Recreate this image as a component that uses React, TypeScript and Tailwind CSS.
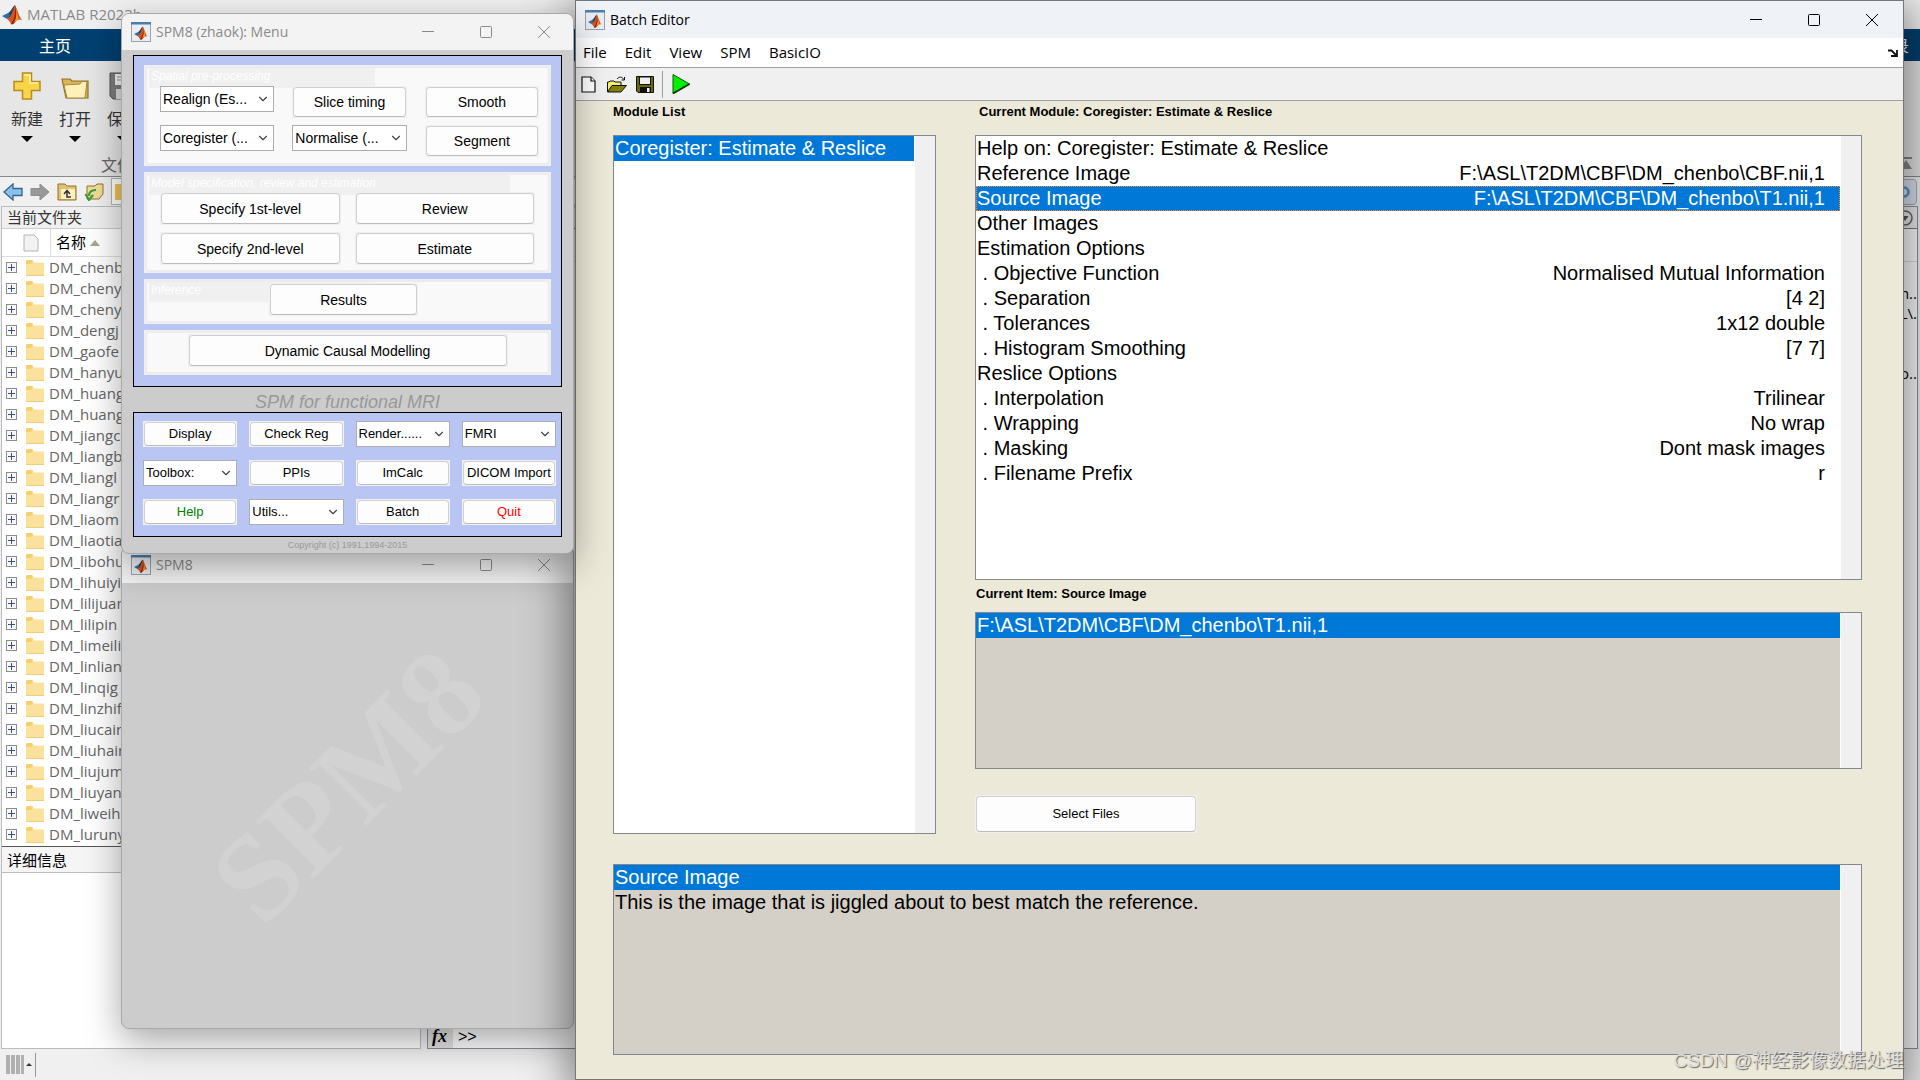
import React from 'react';
import { ChevronDown } from 'lucide-react';

const folders = [
  'DM_chenb', 'DM_cheny', 'DM_chenyu', 'DM_dengj', 'DM_gaofe', 'DM_hanyu', 'DM_huang',
  'DM_huangyu', 'DM_jiangc', 'DM_liangb', 'DM_liangl', 'DM_liangr', 'DM_liaom', 'DM_liaotia',
  'DM_libohu', 'DM_lihuiyi', 'DM_lilijuan', 'DM_lilipin', 'DM_limeili', 'DM_linlian', 'DM_linqig',
  'DM_linzhif', 'DM_liucain', 'DM_liuhain', 'DM_liujum', 'DM_liuyan', 'DM_liweih', 'DM_luruny',
];

const moduleItems = [
  { label: 'Help on: Coregister: Estimate & Reslice', value: '' },
  { label: 'Reference Image', value: 'F:\\ASL\\T2DM\\CBF\\DM_chenbo\\CBF.nii,1' },
  { label: 'Source Image', value: 'F:\\ASL\\T2DM\\CBF\\DM_chenbo\\T1.nii,1', selected: true },
  { label: 'Other Images', value: '' },
  { label: 'Estimation Options', value: '' },
  { label: ' . Objective Function', value: 'Normalised Mutual Information' },
  { label: ' . Separation', value: '[4 2]' },
  { label: ' . Tolerances', value: '1x12 double' },
  { label: ' . Histogram Smoothing', value: '[7 7]' },
  { label: 'Reslice Options', value: '' },
  { label: ' . Interpolation', value: 'Trilinear' },
  { label: ' . Wrapping', value: 'No wrap' },
  { label: ' . Masking', value: 'Dont mask images' },
  { label: ' . Filename Prefix', value: 'r' },
];

function MatlabMark() {
  return (
    <g>
      <path d="M0 11 L6 8 L9 10.5 L5 14 Z" fill="#2f6ea8" />
      <path d="M6 8 C9 7 10 2 13 0 L12 9 L9 12.5 L5 14 L8 10.5 Z" fill="#1d3f66" />
      <path d="M13 0 C15 3 17 12 20 15 C17 13.500 15 15 13 17.500 C11.500 19.500 10 20 9 19 C8 17 7 15 5 14 C9 13 11 5 13 0 Z" fill="#d8541c" />
      <path d="M13 0 C13.500 7 13 14 9 19 C11 20 13 17 14 16 C15 11 14 4 13 0 Z" fill="#8c1f12" />
      <path d="M13.500 2 C15 8 15 13 11.500 18 C14 16.500 15 14.500 16.500 14 C15.500 10 15 5 13.500 2 Z" fill="#f59a2c" />
    </g>
  );
}

function WindowIcon() {
  return (
    <svg viewBox="0 0 20 20" className="w-5 h-5 shrink-0" aria-hidden="true">
      <rect x="0.500" y="0.500" width="19" height="19" fill="#e9edf1" stroke="#9aa3ad" />
      <rect x="0" y="0" width="20" height="2.500" fill="#4d7ea8" />
      <g transform="translate(3 4.500) scale(0.68)">
        <MatlabMark />
      </g>
    </svg>
  );
}

function TitleBar({ title, active = false, height }: { title: string; active?: boolean; height: string }) {
  const tone = active ? 'bg-[#eff3f8] text-black pr-0.5' : 'bg-[#f3f3f3] text-[#8a8a8a]';
  return (
    <header className={`flex items-center shrink-0 pl-[9px] ${height} ${tone}`}>
      <WindowIcon />
      <h2 className="ml-[5px] flex-1 font-['Open_Sans',sans-serif] text-sm">{title}</h2>
      <button aria-label="Minimize" className="w-[58px] h-full flex items-center justify-center">
        <svg viewBox="0 0 12 12" className="w-3 h-3" stroke="currentColor">
          <path d="M0 5.500H12" />
        </svg>
      </button>
      <button aria-label="Maximize" className="w-[58px] h-full flex items-center justify-center">
        <svg viewBox="0 0 12 12" className="w-3 h-3" stroke="currentColor" fill="none">
          <rect x="0.500" y="0.500" width="11" height="11" rx="1" />
        </svg>
      </button>
      <button aria-label="Close" className="w-[58px] h-full flex items-center justify-center">
        <svg viewBox="0 0 12 12" className="w-3 h-3" stroke="currentColor">
          <path d="M0 0L12 12M12 0L0 12" />
        </svg>
      </button>
    </header>
  );
}

function PushButton({ children, className = '' }: { children: React.ReactNode; className?: string }) {
  return (
    <div className={`bg-[#f0f0f0] p-px ${className}`}>
      <button className="w-full h-full rounded border border-[#d0d0d0] border-b-[#bcbcbc] bg-[#fdfdfd] whitespace-nowrap">
        {children}
      </button>
    </div>
  );
}

function PopupMenu({ name, text, className = '' }: { name: string; text: string; className?: string }) {
  return (
    <div className={`relative h-[26px] ${className}`}>
      <select
        aria-label={name}
        className="w-full h-full appearance-none border border-[#adadad] bg-white pl-0.5 pr-5 text-black"
      >
        <option>{text}</option>
      </select>
      <ChevronDown className="absolute right-1 top-1.5 w-3.5 h-3.5 text-[#444] pointer-events-none" strokeWidth={2} />
    </div>
  );
}

function Frame({ label, labelWidth = '', className, children }: {
  label?: string;
  labelWidth?: string;
  className: string;
  children: React.ReactNode;
}) {
  return (
    <section className="relative bg-[#f0f0f0] p-px">
      {label && (
        <h3 className={`absolute left-[5px] top-[3px] h-5 pl-0.5 bg-[#f0f0f0] text-white text-xs italic ${labelWidth}`}>
          {label}
        </h3>
      )}
      <div className={`rounded border-2 border-[#ececec] bg-[#f9f9f9] ${className}`}>{children}</div>
    </section>
  );
}

function MenuWindow() {
  return (
    <section className="relative z-10 flex flex-col rounded-lg overflow-hidden border border-[#a8a8a8] bg-[#ccc] shadow-[0_12px_36px_rgba(0,0,0,0.35)]">
      <TitleBar title="SPM8 (zhaok): Menu" height="h-[36px]" />
      <div className="px-[11px] pt-[5px]">
        <div className="flex flex-col gap-1.5 border border-black bg-[#b9c6f4] px-[10px] pt-[9px] pb-[11px] text-sm">
          <Frame label="Spatial pre-processing" labelWidth="w-[226px]" className="h-[99px] pl-[13px] pr-[9px] pt-[18px]">
            <div className="relative grid grid-cols-3 gap-x-[18px] gap-y-[7px]">
              <PopupMenu name="Realign" text="Realign (Es..." />
              <PushButton className="h-8">Slice timing</PushButton>
              <PushButton className="h-8">Smooth</PushButton>
              <PopupMenu name="Coregister" text="Coregister (..." />
              <PopupMenu name="Normalise" text="Normalise (..." />
              <PushButton className="h-8">Segment</PushButton>
            </div>
          </Frame>
          <Frame label="Model specification, review and estimation" labelWidth="w-[361px]" className="h-[99px] pl-[13px] pr-[13px] pt-[17px]">
            <div className="relative grid grid-cols-2 gap-x-[14px] gap-y-[7px]">
              <PushButton className="h-[33px]">Specify 1st-level</PushButton>
              <PushButton className="h-[33px]">Review</PushButton>
              <PushButton className="h-[33px]">Specify 2nd-level</PushButton>
              <PushButton className="h-[33px]">Estimate</PushButton>
            </div>
          </Frame>
          <Frame label="Inference" labelWidth="w-[226px]" className="h-[43px] pt-px pr-2">
            <PushButton className="relative mx-auto w-[149px] h-[33px]">Results</PushButton>
          </Frame>
          <Frame className="h-[43px] pt-px">
            <PushButton className="mx-auto w-[320px] h-[33px]">Dynamic Causal Modelling</PushButton>
          </Frame>
        </div>
        <p className="h-[25px] pt-[3px] text-center text-lg leading-6 italic text-[#999]">SPM for functional MRI</p>
        <div className="grid grid-cols-4 gap-x-3 gap-y-[13px] border border-black bg-[#b9c6f4] pl-[9px] pr-[5px] pt-2 pb-[11px] text-[13px]">
          <PushButton className="h-[26px]">Display</PushButton>
          <PushButton className="h-[26px]">Check Reg</PushButton>
          <PopupMenu name="Render" text="Render......" />
          <PopupMenu name="Modality" text="FMRI" />
          <PopupMenu name="Toolbox" text="Toolbox:" />
          <PushButton className="h-[26px]">PPIs</PushButton>
          <PushButton className="h-[26px]">ImCalc</PushButton>
          <PushButton className="h-[26px]">DICOM Import</PushButton>
          <PushButton className="h-[26px] text-[#008000]">Help</PushButton>
          <PopupMenu name="Utils" text="Utils..." />
          <PushButton className="h-[26px]">Batch</PushButton>
          <PushButton className="h-[26px] text-[#f00]">Quit</PushButton>
        </div>
        <p className="h-4 text-center text-[9px] leading-4 text-[#999]">Copyright (c) 1991,1994-2015</p>
      </div>
    </section>
  );
}

function GraphicsWindow() {
  return (
    <section className="flex-1 -mt-2 flex flex-col rounded-lg overflow-hidden border border-[#a8a8a8] bg-[#ccc] shadow-[0_12px_36px_rgba(0,0,0,0.35)]">
      <TitleBar title="SPM8" height="h-[36px]" />
      <div className="flex-1 flex items-center justify-center pb-10">
        <span className="-rotate-45 font-['Liberation_Serif',serif] font-bold text-[124px] leading-none text-[#d2d2d2]">
          SPM8
        </span>
      </div>
    </section>
  );
}

function ListBox({ label, className, children }: { label: string; className: string; children: React.ReactNode }) {
  return (
    <div className={`flex border border-[#828790] text-xl leading-[25px] ${className}`}>
      <ul role="listbox" aria-label={label} className="flex-1 min-w-0">
        {children}
      </ul>
      <div className="w-[21px] border-l border-white bg-[#f0f0f0]" />
    </div>
  );
}

function BatchEditor() {
  return (
    <section className="absolute left-[575px] right-4 inset-y-0 flex flex-col border border-[#777] bg-[#ece9d8] shadow-[0_12px_40px_8px_rgba(0,0,0,0.45)]">
      <TitleBar title="Batch Editor" active height="h-[37px]" />
      <nav className="h-[30px] shrink-0 flex items-center gap-[18px] pl-[7px] pr-[5px] border-b border-[#a0a0a0] bg-white font-['Open_Sans',sans-serif] text-[15px]">
        <button>File</button>
        <button>Edit</button>
        <button>View</button>
        <button>SPM</button>
        <button>BasicIO</button>
        <button aria-label="Dock window" className="ml-auto">
          <svg viewBox="0 0 10 8" className="w-2.5 h-2" fill="none" stroke="#111" strokeWidth="1.800">
            <path d="M0 1.500H3.500L8 6M9 1V7H3" />
          </svg>
        </button>
      </nav>
      <div className="h-[33px] shrink-0 flex items-center pl-[5px] border-b border-[#a0a0a0] bg-[#f0f0f0]">
        <button aria-label="New batch">
          <svg viewBox="0 0 15 17" className="w-[15px] h-[17px]" fill="#fff" stroke="#111" strokeWidth="1.200">
            <path d="M1 1H10L14 5V16H1Z" />
            <path d="M10 1V5H14" />
          </svg>
        </button>
        <button aria-label="Open batch" className="ml-[11px]">
          <svg viewBox="0 0 20 17" className="w-5 h-[17px]" stroke="#111" strokeLinejoin="round">
            <path d="M0.500 16V6H2L3 5H7L8 6H14V9" fill="#f5f06a" />
            <path d="M0.500 16L5 9.500H19.500L14 16Z" fill="#84800c" />
            <path d="M10 3C12 0.500 15 0.500 17 3.500M17.500 1V4H14.500" fill="none" />
          </svg>
        </button>
        <button aria-label="Save batch" className="ml-[9px]">
          <svg viewBox="0 0 18 17" className="w-[18px] h-[17px]">
            <path d="M0.500 0.500H17.500V16.500H2L0.500 15Z" fill="#6b680a" stroke="#111" />
            <rect x="3.500" y="1" width="11" height="7.500" fill="#f0f0f0" stroke="#111" />
            <rect x="4" y="11" width="11" height="5.500" fill="#111" />
            <rect x="11" y="12" width="2.500" height="4" fill="#f0f0f0" />
          </svg>
        </button>
        <div className="ml-2 w-px h-[27px] bg-[#a0a0a0]" />
        <button aria-label="Run batch" className="ml-[9px]">
          <svg viewBox="0 0 18 20" className="w-[18px] h-5">
            <path d="M1 0.500L17.500 10L1 19.500Z" fill="#00f000" stroke="#0a5a0a" />
            <path d="M17.500 10L1 19.500" stroke="#033503" strokeWidth="1.800" />
          </svg>
        </button>
      </div>

      <div className="flex-1 flex flex-col gap-[30px] pl-[37px] pr-[41px] pb-6">
        <div className="grid grid-cols-[323fr_887fr] gap-x-[39px]">
          <div className="flex flex-col">
            <h3 className="h-[34px] pt-px text-[13px] leading-5 font-bold">Module List</h3>
            <ListBox label="Module List" className="flex-1 bg-white">
              <li role="option" aria-selected="true" className="bg-[#0078d7] text-white pl-px">
                Coregister: Estimate &amp; Reslice
              </li>
            </ListBox>
          </div>

          <div className="flex flex-col">
            <h3 className="h-[34px] pl-1 pt-px text-[13px] leading-5 font-bold">
              Current Module: Coregister: Estimate &amp; Reslice
            </h3>
            <ListBox label="Current Module" className="h-[445px] bg-white">
              {moduleItems.map((item) => (
                <li
                  key={item.label}
                  role="option"
                  aria-selected={!!item.selected}
                  className={`flex justify-between whitespace-pre pl-px pr-[15px] ${
                    item.selected ? 'bg-[#0078d7] text-white outline-1 outline-dotted -outline-offset-1 outline-[#ff8728]' : ''
                  }`}
                >
                  <span>{item.label}</span>
                  <span>{item.value}</span>
                </li>
              ))}
            </ListBox>
            <h3 className="h-8 pl-px pt-1 text-[13px] leading-5 font-bold">Current Item: Source Image</h3>
            <ListBox label="Current Item" className="h-[157px] bg-[#d4d0c8]">
              <li role="option" aria-selected="true" className="bg-[#0078d7] text-white pl-px">
                F:\ASL\T2DM\CBF\DM_chenbo\T1.nii,1
              </li>
            </ListBox>
            <PushButton className="mt-[26px] mb-px w-[222px] h-[38px] text-[13px]">Select Files</PushButton>
          </div>
        </div>

        <ListBox label="Help" className="flex-1 min-h-[150px] bg-[#d4d0c8]">
          <li role="option" aria-selected="true" className="bg-[#0078d7] text-white pl-px">Source Image</li>
          <li role="option" aria-selected="false" className="pl-px">
            This is the image that is jiggled about to best match the reference.
          </li>
        </ListBox>
      </div>
    </section>
  );
}

function FolderIcon() {
  return (
    <svg viewBox="0 0 18 16" className="ml-[9px] w-[18px] h-4 shrink-0" aria-hidden="true">
      <path d="M0 1.500Q0 0 1.500 0H6L8 2.500H17Q18 2.500 18 3.500V15Q18 16 17 16H1Q0 16 0 15Z" fill="#fbe29c" />
      <path d="M0 1.500Q0 0 1.500 0H6L7 1.500L5 4H0Z" fill="#f5cf6e" />
      <path d="M0 15.500H18" stroke="#f0cd78" />
    </svg>
  );
}

function ToolButton({ label, children }: { label: string; children: React.ReactNode }) {
  return (
    <button className="w-12 flex flex-col items-center text-base leading-6 text-[#333]">
      <svg viewBox="0 0 28 28" className="w-7 h-7 mb-2">{children}</svg>
      {label}
      <svg viewBox="0 0 12 6" className="w-3 h-1.5 mt-1">
        <path d="M0 0H12L6 6Z" fill="#000" />
      </svg>
    </button>
  );
}

function MatlabDesktop() {
  return (
    <div className="flex-1 flex flex-col bg-[#f0f0f0]">
      <header className="h-[29px] flex items-center pl-0.5 text-[#8a8a8a]">
        <svg viewBox="0 0 20 20" className="w-5 h-5" aria-hidden="true">
          <MatlabMark />
        </svg>
        <h1 className="ml-[5px] font-['Open_Sans',sans-serif] text-[15px]">MATLAB R2023b</h1>
      </header>
      <nav className="h-8 flex items-center justify-between bg-[#004071] pl-[39px] pr-[11px] pt-1 text-base text-white">
        <button>主页</button>
        <button>登录</button>
      </nav>
      <div className="h-[116px] flex flex-col border-b border-[#8a8a8a] bg-[#e6e6e6]">
        <div className="flex pl-[3px] pt-[11px]">
          <ToolButton label="新建">
            <path d="M9.500 1H18.500V9.500H27V18.500H18.500V27H9.500V18.500H1V9.500H9.500Z" fill="#f7d548" stroke="#b98a1e" strokeWidth="1.500" />
            <path d="M11 3H17V11H25" fill="none" stroke="#fff3b0" strokeWidth="1.500" />
          </ToolButton>
          <ToolButton label="打开">
            <path d="M1 7H9L11 9H27V26H5Z" fill="#d9b458" stroke="#8f7228" strokeWidth="1.200" />
            <path d="M3 13L19 12L21 9.500H26L24 26H6Z" fill="#fdf0b8" stroke="#a88a3c" />
          </ToolButton>
          <ToolButton label="保存">
            <path d="M1 1H27V27H4L1 24Z" fill="#7d7d7d" stroke="#555" />
            <rect x="6" y="2" width="16" height="11" fill="#f4f4f4" />
            <path d="M8 5H20M8 8H20" stroke="#999" />
            <rect x="7" y="17" width="14" height="10" fill="#ddd" />
          </ToolButton>
          <svg viewBox="0 0 12 12" className="ml-auto mt-[85px] mr-2 w-3 h-3" aria-hidden="true">
            <path d="M0 1H12" stroke="#888" strokeWidth="2" />
            <path d="M6 3L12 12H0Z" fill="#888" />
          </svg>
        </div>
        <p className="-mt-[15px] pl-[101px] text-base leading-6 text-[#666]">文件</p>
      </div>

      <div className="h-[29px] flex items-center gap-[7px] pl-[3px] pr-[3px]">
        <button aria-label="Back">
          <svg viewBox="0 0 20 18" className="w-5 h-[18px]">
            <path d="M1 9L10 1V5.500H19V12.500H10V17Z" fill="#8fc0e6" stroke="#2e6496" strokeWidth="1.300" />
          </svg>
        </button>
        <button aria-label="Forward">
          <svg viewBox="0 0 20 18" className="w-5 h-[18px]">
            <path d="M19 9L10 1V5.500H1V12.500H10V17Z" fill="#999" stroke="#8c8c8c" />
          </svg>
        </button>
        <button aria-label="Up one level">
          <svg viewBox="0 0 20 18" className="w-5 h-[18px]">
            <path d="M1 1H8L10 3H19V17H1Z" fill="#e2c272" stroke="#8f7228" />
            <rect x="4" y="6" width="14" height="10" fill="#fbf0c4" />
            <path d="M7 11L10 7.500L13 11M10 8V14H14" fill="none" stroke="#333" strokeWidth="1.500" />
          </svg>
        </button>
        <button aria-label="Browse for folder">
          <svg viewBox="0 0 20 18" className="w-5 h-[18px]">
            <path d="M3 3H11L13 1H19V11L15 16H3Z" fill="#f0dc98" stroke="#8f7228" />
            <path d="M12 7C7 7 5 9 5 13M1.500 11L5 17L9 12" fill="none" stroke="#3c9a3c" strokeWidth="2.200" />
          </svg>
        </button>
        <div className="flex-1 h-[27px] flex items-center border border-[#b4b4b4] bg-white">
          <span className="ml-[3px] w-4 h-4 bg-[#f2c24e]" />
        </div>
        <button aria-label="Search" className="w-6 h-[26px] flex items-center justify-center rounded border border-[#a5adbd] bg-[#dfe4f0]">
          <svg viewBox="0 0 14 14" className="w-3.5 h-3.5" fill="none" stroke="#4d94d0" strokeWidth="2.500">
            <circle cx="6" cy="7" r="4.500" />
          </svg>
        </button>
      </div>

      <div className="flex-1 flex gap-1.5 pl-px pr-0.5">
        <aside className="w-[420px] flex flex-col border border-[#bcbcbc] bg-white">
          <h2 className="h-[22px] shrink-0 pl-[5px] text-[15px] leading-[22px] text-[#333] bg-[#f0f0f0] border-b border-[#ccc]">
            当前文件夹
          </h2>
          <div className="h-7 shrink-0 flex items-center border-b border-[#ddd] text-[15px]">
            <span className="w-[49px] h-full pl-[21px] flex items-center border-r border-[#ddd]">
              <svg viewBox="0 0 16 18" className="w-4 h-[18px]" fill="#f2f2f2" stroke="#b4b4b4" aria-hidden="true">
                <path d="M1 1H11L15 5V17H1Z" />
              </svg>
            </span>
            <span className="ml-[5px] pt-0.5">名称</span>
            <svg viewBox="0 0 10 6" className="ml-1 w-2.5 h-1.5" aria-hidden="true">
              <path d="M5 0L10 6H0Z" fill="#a8a494" />
            </svg>
          </div>
          <ul className="pb-px font-['Open_Sans',sans-serif] text-[15px] text-[#666]">
            {folders.map((name) => (
              <li key={name} className="h-[21px] flex items-center pl-1">
                <svg viewBox="0 0 11 11" className="w-[11px] h-[11px] shrink-0" fill="none" aria-hidden="true">
                  <rect x="0.500" y="0.500" width="10" height="10" fill="#fafafa" stroke="#8c8c8c" />
                  <path d="M2 5.500H9M5.500 2V9" stroke="#35508c" />
                </svg>
                <FolderIcon />
                <span className="ml-[5px]">{name}</span>
              </li>
            ))}
          </ul>
          <h2 className="h-[27px] shrink-0 pl-[5px] border-t border-[#555] border-b border-b-[#bcbcbc] bg-[#f5f5f5] text-[15px] leading-7">
            详细信息
          </h2>
        </aside>

        <main className="flex-1 flex flex-col border border-[#8c8fa0] bg-white">
          <div className="h-[22px] flex items-center justify-end pr-1 border-b border-[#777a88] bg-[#f0f0f0]">
            <svg viewBox="0 0 16 16" className="w-4 h-4" fill="none" stroke="#666" strokeWidth="1.500" aria-hidden="true">
              <circle cx="8" cy="8" r="7" />
              <path d="M4.500 6H11.500L8 11Z" fill="#555" stroke="none" />
            </svg>
          </div>
          <div className="h-[33px] border-b border-[#ddd]" />
          <div className="pt-[21px] text-right font-['Open_Sans',sans-serif] text-[15px] leading-5">
            <p>Path..</p>
            <p>F:\ASL\.</p>
            <p className="mt-10">chenbo..</p>
          </div>
          <div className="mt-auto h-[22px] flex items-center">
            <span className="w-[25px] h-full pl-1 bg-[#e4e4e4] font-['Liberation_Serif',serif] text-lg leading-5 font-bold italic">fx</span>
            <span className="ml-[5px] text-base">&gt;&gt;</span>
          </div>
        </main>
      </div>

      <footer className="h-[31px] shrink-0 flex items-center pl-1.5">
        <svg viewBox="0 0 18 19" className="w-[18px] h-[19px]" fill="#b0b0b0" aria-hidden="true">
          <path d="M0 0H4V19H0ZM5 0H9V19H5ZM10 0H14V19H10ZM15 0H18V19H15Z" />
        </svg>
        <svg viewBox="0 0 6 3" className="ml-0.5 w-1.5 h-[3px]" aria-hidden="true">
          <path d="M3 0L6 3H0Z" fill="#333" />
        </svg>
        <div className="ml-[3px] w-px h-6 bg-[#999]" />
      </footer>
    </div>
  );
}

export default function App() {
  return (
    <div className="relative min-h-screen flex flex-col overflow-hidden font-['Liberation_Sans','Noto_Sans_CJK_SC',sans-serif] text-black">
      <MatlabDesktop />
      <div className="absolute left-[121px] top-[13px] bottom-[51px] w-[453px] flex flex-col">
        <MenuWindow />
        <GraphicsWindow />
      </div>
      <BatchEditor />
      <p className="absolute right-4 bottom-1 text-[19px] leading-[30px] text-[#dedede] [text-shadow:1px_1px_1px_#666]">
        CSDN @神经影像数据处理
      </p>
    </div>
  );
}
